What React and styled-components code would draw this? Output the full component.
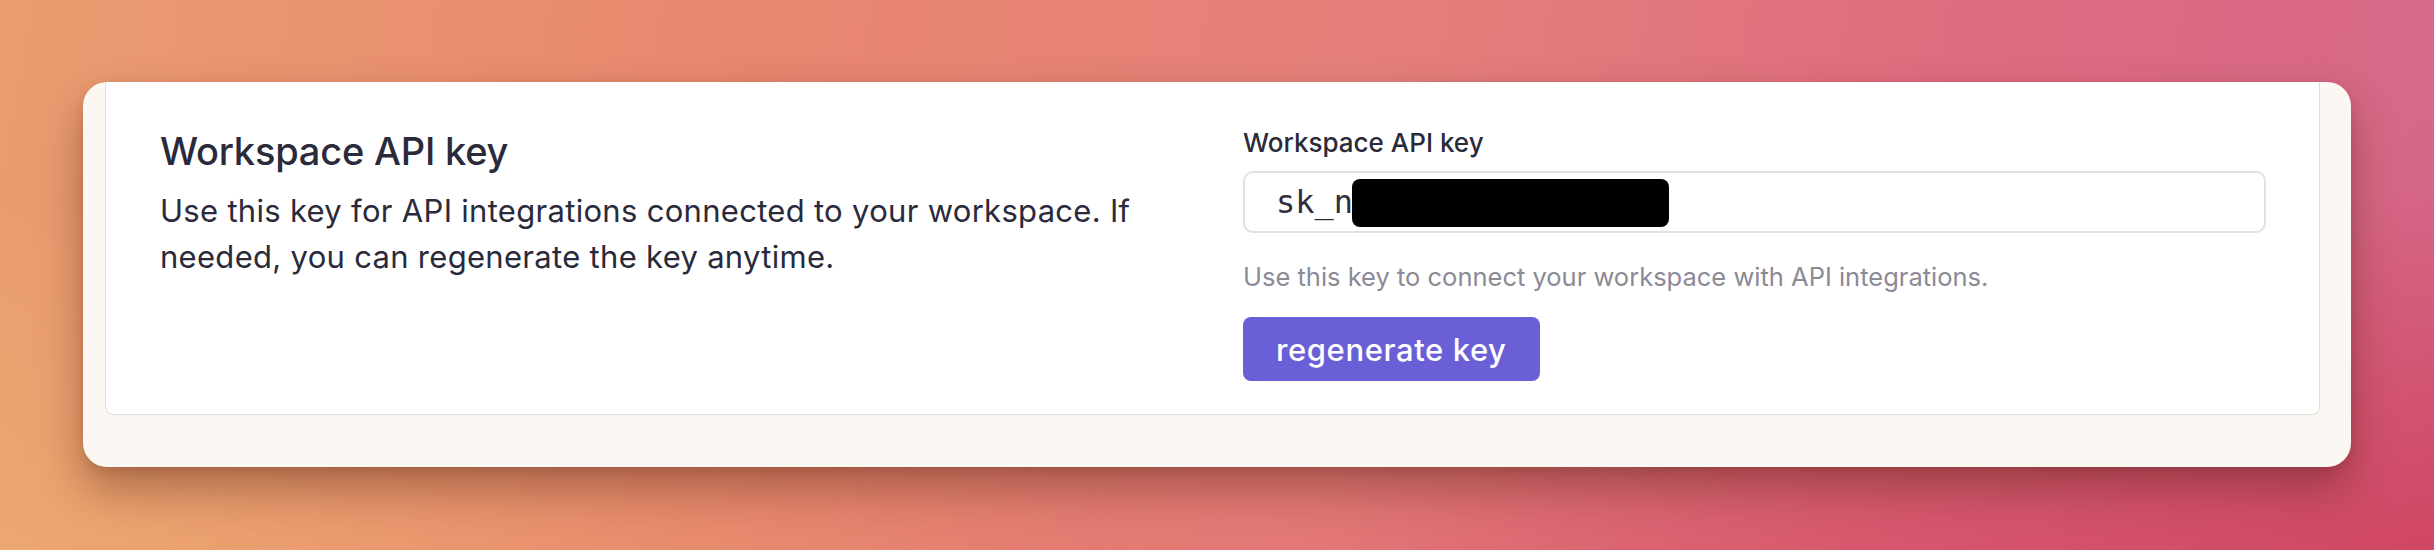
import React from "react";
import styled, { createGlobalStyle } from "styled-components";

const GlobalStyle = createGlobalStyle`
  html, body { margin: 0; padding: 0; }
  body {
    font-family: Inter, "Noto Sans", sans-serif;
    -webkit-font-smoothing: antialiased;
  }
  * { box-sizing: border-box; }
`;

const Backdrop = styled.div`
  width: 2434px;
  height: 550px;
  padding: 82px 83px 83px;
  background:
    linear-gradient(175deg, rgba(0, 0, 0, 0) 40%, rgba(200, 40, 60, 0.1) 100%),
    linear-gradient(100deg, #ea9d70 0%, #e8876f 30%, #e57f7b 55%, #de6c7f 78%, #d5678a 100%);
  position: relative;
  overflow: hidden;
`;

const BottomGlow = styled.div`
  position: absolute;
  inset: 0;
  background: linear-gradient(90deg, rgba(240, 180, 115, 0.6) 0%, rgba(240, 180, 115, 0) 45%, rgba(210, 60, 80, 0) 55%, rgba(206, 62, 88, 0.75) 100%);
  mask-image: linear-gradient(180deg, transparent 35%, #000 100%);
  -webkit-mask-image: linear-gradient(180deg, transparent 35%, #000 100%);
  pointer-events: none;
`;

const Card = styled.div`
  position: relative;
  height: 385px;
  background: #fbf8f3;
  border-radius: 24px;
  padding: 0 31px 52px 22px;
  box-shadow: 0 22px 44px rgba(70, 25, 10, 0.38), 0 4px 10px rgba(70, 25, 10, 0.12);
  overflow: hidden;
`;

const Panel = styled.section`
  height: 100%;
  background: #ffffff;
  border: 1px solid #e3ded7;
  border-top: none;
  border-radius: 0 0 8px 8px;
  padding: 46px 53px 31px 54px;
  display: grid;
  grid-template-columns: 1fr 1fr;
  column-gap: 60px;
  align-items: start;
`;

const Intro = styled.div`
  display: flex;
  flex-direction: column;
  gap: 14px;
`;

const Heading = styled.h2`
  margin: 0;
  font-size: 38px;
  line-height: 46px;
  font-weight: 500;
  color: #2a2a3b;
  letter-spacing: -0.2px;
`;

const Description = styled.p`
  margin: 0;
  font-size: 31px;
  line-height: 46px;
  font-weight: 400;
  letter-spacing: 0.3px;
  color: #2a2a3b;
`;

const Field = styled.div`
  display: flex;
  flex-direction: column;
  align-items: flex-start;
`;

const Label = styled.label`
  font-size: 26px;
  line-height: 30px;
  font-weight: 500;
  color: #2a2a3b;
  margin-bottom: 13px;
`;

const KeyBox = styled.div`
  position: relative;
  width: 100%;
  height: 62px;
  border: 2px solid #e4e0da;
  border-radius: 10px;
  background: #ffffff;
  display: flex;
  align-items: center;
  padding: 0 31px;
  font-family: "DejaVu Sans Mono", "Liberation Mono", monospace;
  font-size: 32px;
  color: #2f2f3d;
`;

const Redaction = styled.span`
  position: absolute;
  left: 107px;
  top: 6px;
  width: 317px;
  height: 48px;
  background: #000000;
  border-radius: 8px;
`;

const Helper = styled.p`
  margin: 26px 0 0;
  font-size: 25.5px;
  line-height: 36px;
  color: #8b8a96;
`;

const Button = styled.button`
  margin-top: 22px;
  height: 64px;
  padding: 0 33px;
  border: none;
  border-radius: 8px;
  background: #6a5fd7;
  color: #ffffff;
  font-family: Inter, "Noto Sans", sans-serif;
  font-size: 31px;
  font-weight: 500;
  letter-spacing: 0.6px;
  cursor: pointer;
`;

export default function App() {
  return (
    <>
      <GlobalStyle />
      <Backdrop>
        <BottomGlow />
        <Card>
          <Panel>
            <Intro>
              <Heading>Workspace API key</Heading>
              <Description>
                Use this key for API integrations connected to your workspace. If needed, you can
                regenerate the key anytime.
              </Description>
            </Intro>
            <Field>
              <Label>Workspace API key</Label>
              <KeyBox>
                sk_n
                <Redaction />
              </KeyBox>
              <Helper>Use this key to connect your workspace with API integrations.</Helper>
              <Button>regenerate key</Button>
            </Field>
          </Panel>
        </Card>
      </Backdrop>
    </>
  );
}
